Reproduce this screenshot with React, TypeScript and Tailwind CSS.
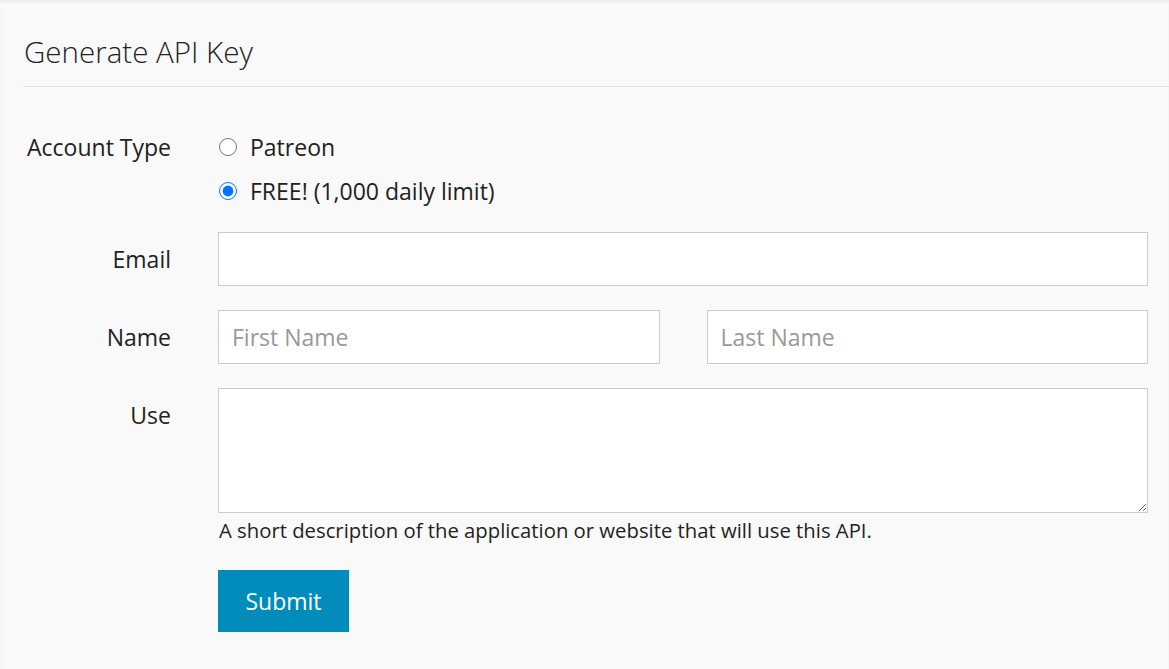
import { useState } from "react";

export default function App() {
    const [account, setAccount] = useState("free");

    return (
        <div
            className="min-h-[669px] bg-[#f9f9f9] shadow-[inset_0_3px_3px_-1px_rgba(0,0,0,0.06)] text-[#222]"
            style={{ fontFamily: "'Open Sans', 'Liberation Sans', sans-serif" }}
        >
            <div className="pl-[23px] pt-[32px]">
                <h1 className="text-[29.5px] font-light leading-[40px] pl-[1px] text-[#222]">Generate API Key</h1>
                <hr className="mt-[14px] border-0 border-t border-[#e3e3e3]" />
            </div>

            <form className="pl-[23px] pr-[21px] pt-[38px] flex flex-col text-[23px]">
                {/* tipo de cuenta */}
                <div className="flex">
                    <div className="w-[148px] text-right leading-[44px]">Account Type</div>
                    <div className="ml-[47px] flex flex-col">
                        {[
                            { id: "patreon", label: "Patreon" },
                            { id: "free", label: "FREE! (1,000 daily limit)" },
                        ].map((opt) => (
                            <label key={opt.id} className="flex items-center h-[44px] cursor-pointer">
                                <input
                                    type="radio"
                                    name="account"
                                    checked={account === opt.id}
                                    onChange={() => setAccount(opt.id)}
                                    className="w-[18px] h-[18px] ml-[1px] mr-[13px] accent-[#0075ff]"
                                />
                                <span>{opt.label}</span>
                            </label>
                        ))}
                    </div>
                </div>

                {/* email */}
                <div className="flex items-center mt-[19px]">
                    <div className="w-[148px] text-right">Email</div>
                    <input
                        type="email"
                        className="ml-[47px] flex-1 h-[54px] bg-white border border-[#cccccc] px-[13px] outline-none"
                    />
                </div>

                {/* nombre */}
                <div className="flex items-center mt-[24px]">
                    <div className="w-[148px] text-right">Name</div>
                    <div className="ml-[47px] flex-1 grid grid-cols-2 gap-[47px]">
                        <input
                            placeholder="First Name"
                            className="h-[54px] bg-white border border-[#cccccc] px-[13px] outline-none placeholder:text-[#999]"
                        />
                        <input
                            placeholder="Last Name"
                            className="h-[54px] bg-white border border-[#cccccc] px-[13px] outline-none placeholder:text-[#999]"
                        />
                    </div>
                </div>

                {/* uso */}
                <div className="flex items-start mt-[24px]">
                    <div className="w-[148px] text-right leading-[30px] pt-[12px]">Use</div>
                    <div className="ml-[47px] flex-1 flex flex-col">
                        <textarea className="h-[125px] bg-white border border-[#cccccc] px-[13px] py-[10px] outline-none block" />
                        <p className="text-[20.3px] leading-[27px] pt-[4px] pl-[1px]">
                            A short description of the application or website that will use this API.
                        </p>
                        <div className="mt-[26px]">
                            <button
                                type="button"
                                className="w-[131px] h-[62px] bg-[#008cba] text-white text-[23px] cursor-pointer"
                            >
                                Submit
                            </button>
                        </div>
                    </div>
                </div>
            </form>
        </div>
    );
}
